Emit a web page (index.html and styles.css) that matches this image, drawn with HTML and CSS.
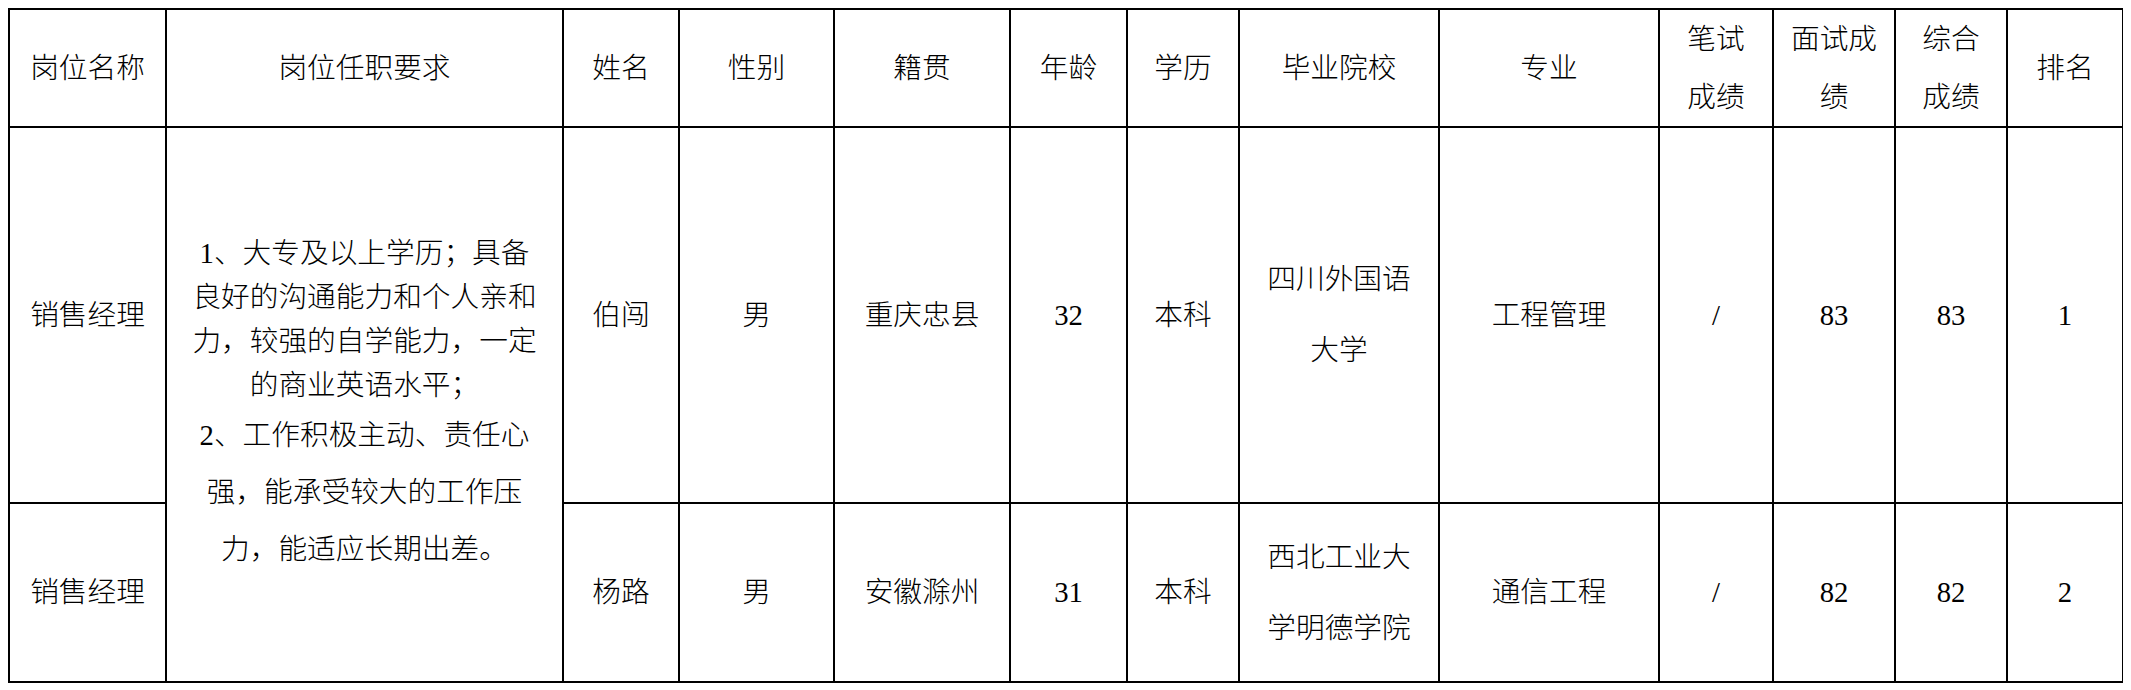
FILE: index.html
```html
<!DOCTYPE html>
<html lang="zh-CN">
<head>
<meta charset="utf-8">
<title>面试成绩表</title>
<link rel="stylesheet" href="styles.css">
</head>
<body>
<div class="sheet">
  <div class="cell head">岗位名称</div>
  <div class="cell head">岗位任职要求</div>
  <div class="cell head">姓名</div>
  <div class="cell head">性别</div>
  <div class="cell head">籍贯</div>
  <div class="cell head">年龄</div>
  <div class="cell head">学历</div>
  <div class="cell head">毕业院校</div>
  <div class="cell head">专业</div>
  <div class="cell head two">笔试<br>成绩</div>
  <div class="cell head two">面试成<br>绩</div>
  <div class="cell head two">综合<br>成绩</div>
  <div class="cell head">排名</div>

  <div class="cell">销售经理</div>
  <div class="cell req">
    <div class="req-text">
      <p class="p1">1、大专及以上学历；具备<br>良好的沟通能力和个人亲和<br>力，较强的自学能力，一定<br>的商业英语水平；</p>
      <p class="p2">2、工作积极主动、责任心<br>强，能承受较大的工作压<br>力，能适应长期出差。</p>
    </div>
  </div>
  <div class="cell">伯闯</div>
  <div class="cell">男</div>
  <div class="cell">重庆忠县</div>
  <div class="cell">32</div>
  <div class="cell">本科</div>
  <div class="cell school">四川外国语<br>大学</div>
  <div class="cell">工程管理</div>
  <div class="cell">/</div>
  <div class="cell">83</div>
  <div class="cell">83</div>
  <div class="cell">1</div>

  <div class="cell">销售经理</div>
  <div class="cell">杨路</div>
  <div class="cell">男</div>
  <div class="cell">安徽滁州</div>
  <div class="cell">31</div>
  <div class="cell">本科</div>
  <div class="cell school">西北工业大<br>学明德学院</div>
  <div class="cell">通信工程</div>
  <div class="cell">/</div>
  <div class="cell">82</div>
  <div class="cell">82</div>
  <div class="cell">2</div>
</div>
</body>
</html>
```

FILE: styles.css
```css
html, body {
  background: #ffffff;
}

body {
  margin: 8px;
  font-family: "Liberation Serif", "Noto Sans CJK SC", serif;
  font-size: 28.7px;
  font-weight: 300;
  color: #000000;
}

.sheet {
  display: grid;
  grid-template-columns: 157px 397px 116px 155px 176px 117px 112px 200px 220px 114px 122px 112px 116px;
  grid-template-rows: 118px 376px 179px;
  width: max-content;
  border-top: 2px solid #000;
  border-left: 2px solid #000;
}

.cell {
  display: flex;
  align-items: center;
  justify-content: center;
  text-align: center;
  border-right: 2px solid #000;
  border-bottom: 2px solid #000;
  line-height: 1.2;
  white-space: nowrap;
}

.head.two {
  line-height: 58px;
}

.school {
  line-height: 71px;
}

.req {
  grid-row: span 2;
}

.req-text p {
  margin: 0;
}

.req-text .p1 {
  line-height: 44px;
}

.req-text .p2 {
  line-height: 57px;
}
```
